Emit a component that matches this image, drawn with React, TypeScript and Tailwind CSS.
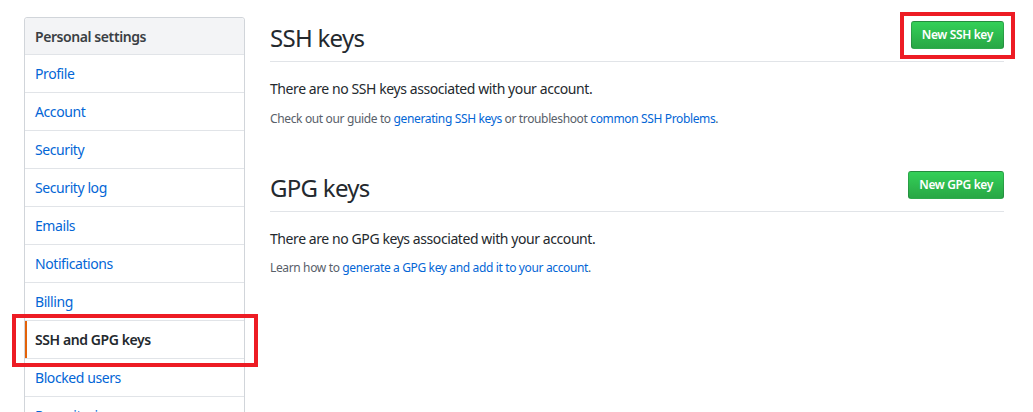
import React from "react";

const items = [
  "Profile",
  "Account",
  "Security",
  "Security log",
  "Emails",
  "Notifications",
  "Billing",
  "SSH and GPG keys",
  "Blocked users",
  "Repositories",
  "Organizations",
];

function Button({ label }: { label: string }) {
  return (
    <button className="h-[28px] px-[10px] rounded-[3px] border border-[rgba(27,31,35,0.2)] bg-gradient-to-b from-[#34d058] to-[#28a745] text-white text-[12px] tracking-[-0.03em] font-semibold leading-[26px] whitespace-nowrap">
      {label}
    </button>
  );
}

export default function App() {
  return (
    <div
      className="w-[1033px] h-[412px] overflow-hidden bg-white text-[#24292e]"
      style={{ fontFamily: '"Noto Sans", "Open Sans", Arial, sans-serif' }}
    >
      <div className="flex pl-[24px] pt-[17px]">
        {/* Sidebar */}
        <nav className="w-[221px] shrink-0 border border-[#d1d5da] rounded-t-[3px] text-[14px] tracking-[-0.03em]">
          <div className="h-[37px] flex items-center px-[10px] bg-[#f3f4f6] border-b border-[#e1e4e8] font-semibold text-[#3a3f44] rounded-t-[3px]">
            Personal settings
          </div>
          {items.map((it) => {
            const active = it === "SSH and GPG keys";
            return (
              <div
                key={it}
                className="relative h-[38px] flex items-center px-[10px] border-b border-[#e1e4e8]"
              >
                {active ? (
                  <>
                    <span className="absolute left-0 top-0 bottom-0 w-[2px] bg-[#e36209]" />
                    <span className="font-semibold text-[#24292e]">{it}</span>
                    <span className="absolute -left-[13px] -right-[14px] -top-[7px] -bottom-[9px] border-[4px] border-[#ed1c24]" />
                  </>
                ) : (
                  <span className="text-[#0366d6]">{it}</span>
                )}
              </div>
            );
          })}
        </nav>

        {/* Main */}
        <main className="ml-[25px] w-[734px] shrink-0 pt-[4px]">
          <section>
            <div className="flex items-start justify-between border-b border-[#e1e4e8] pb-[8px]">
              <h2 className="mt-[2px] text-[24px] tracking-[-0.03em] leading-[30px] font-normal text-[#24292e]">SSH keys</h2>
              <div className="relative">
                <Button label="New SSH key" />
                <span className="absolute -left-[11px] -right-[11px] -top-[9px] -bottom-[10px] border-[4px] border-[#ed1c24]" />
              </div>
            </div>
            <p className="mt-[16px] text-[14px] tracking-[-0.03em] leading-[21px]">There are no SSH keys associated with your account.</p>
            <p className="mt-[11px] text-[12px] tracking-[-0.03em] leading-[18px] text-[#586069]">
              Check out our guide to <span className="text-[#0366d6]">generating SSH keys</span> or troubleshoot{" "}
              <span className="text-[#0366d6]">common SSH Problems</span>.
            </p>
          </section>

          <section className="mt-[43px]">
            <div className="flex items-start justify-between border-b border-[#e1e4e8] pb-[8px]">
              <h2 className="mt-[2px] text-[24px] tracking-[-0.03em] leading-[30px] font-normal text-[#24292e]">GPG keys</h2>
              <Button label="New GPG key" />
            </div>
            <p className="mt-[16px] text-[14px] tracking-[-0.03em] leading-[21px]">There are no GPG keys associated with your account.</p>
            <p className="mt-[10px] text-[12px] tracking-[-0.03em] leading-[18px] text-[#586069]">
              Learn how to <span className="text-[#0366d6]">generate a GPG key and add it to your account</span>.
            </p>
          </section>
        </main>
      </div>
    </div>
  );
}
